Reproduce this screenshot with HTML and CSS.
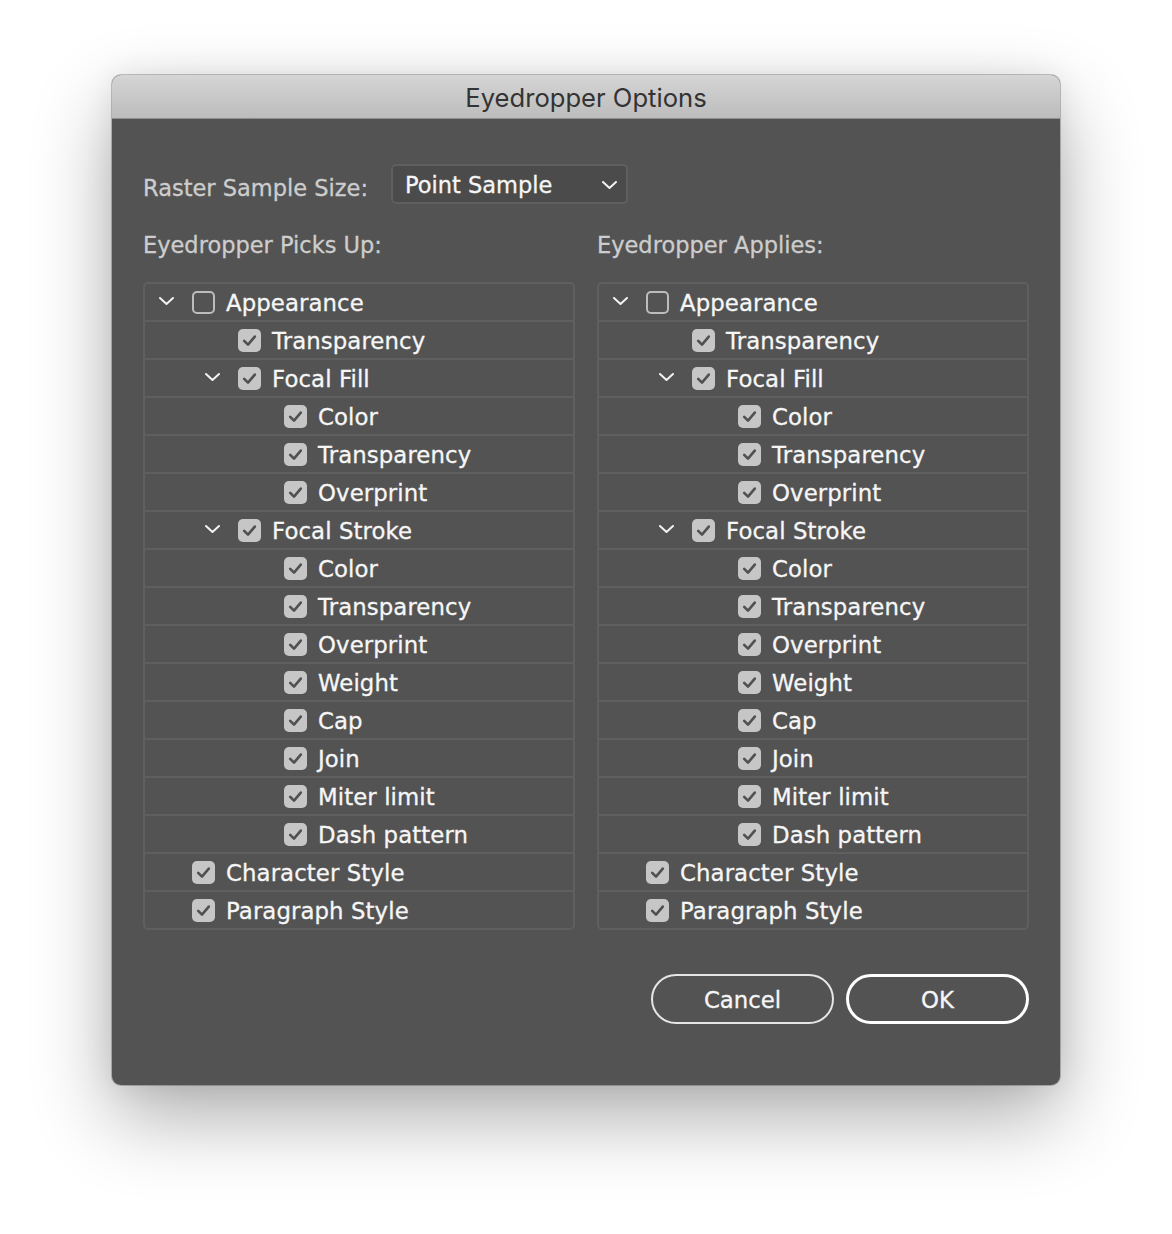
FILE: index.html
```html
<!DOCTYPE html>
<html>
<head>
<meta charset="utf-8">
<title>Eyedropper Options</title>
<link rel="stylesheet" href="styles.css">
</head>
<body>
<svg class="defs" width="0" height="0" aria-hidden="true">
  <symbol id="chev" viewBox="0 0 15 8"><path d="M1 1 L7.5 7 L14 1" fill="none" stroke="currentColor" stroke-width="2" stroke-linecap="round" stroke-linejoin="round"/></symbol>
  <symbol id="tick" viewBox="0 0 23 23"><path d="M6.2 11.8 L10 15.6 L16.8 7.6" fill="none" stroke="currentColor" stroke-width="2.6" stroke-linecap="round" stroke-linejoin="round"/></symbol>
</svg>
<div class="stage">
  <div class="window">
    <div class="titlebar">Eyedropper Options</div>
    <div class="content">
      <div class="raster">
        <span class="label">Raster Sample Size:</span>
        <div class="select"><span>Point Sample</span><svg class="select-chev"><use href="#chev"/></svg></div>
      </div>
      <div class="columns">
        <section>
          <div class="heading">Eyedropper Picks Up:</div>
          <div class="tree">
            <div class="row l0"><span class="twisty"><svg><use href="#chev"/></svg></span><span class="cb off"></span><span class="text">Appearance</span></div>
            <div class="row l1"><span class="twisty"></span><span class="cb"><svg><use href="#tick"/></svg></span><span class="text">Transparency</span></div>
            <div class="row l1"><span class="twisty"><svg><use href="#chev"/></svg></span><span class="cb"><svg><use href="#tick"/></svg></span><span class="text">Focal Fill</span></div>
            <div class="row l2"><span class="twisty"></span><span class="cb"><svg><use href="#tick"/></svg></span><span class="text">Color</span></div>
            <div class="row l2"><span class="twisty"></span><span class="cb"><svg><use href="#tick"/></svg></span><span class="text">Transparency</span></div>
            <div class="row l2"><span class="twisty"></span><span class="cb"><svg><use href="#tick"/></svg></span><span class="text">Overprint</span></div>
            <div class="row l1"><span class="twisty"><svg><use href="#chev"/></svg></span><span class="cb"><svg><use href="#tick"/></svg></span><span class="text">Focal Stroke</span></div>
            <div class="row l2"><span class="twisty"></span><span class="cb"><svg><use href="#tick"/></svg></span><span class="text">Color</span></div>
            <div class="row l2"><span class="twisty"></span><span class="cb"><svg><use href="#tick"/></svg></span><span class="text">Transparency</span></div>
            <div class="row l2"><span class="twisty"></span><span class="cb"><svg><use href="#tick"/></svg></span><span class="text">Overprint</span></div>
            <div class="row l2"><span class="twisty"></span><span class="cb"><svg><use href="#tick"/></svg></span><span class="text">Weight</span></div>
            <div class="row l2"><span class="twisty"></span><span class="cb"><svg><use href="#tick"/></svg></span><span class="text">Cap</span></div>
            <div class="row l2"><span class="twisty"></span><span class="cb"><svg><use href="#tick"/></svg></span><span class="text">Join</span></div>
            <div class="row l2"><span class="twisty"></span><span class="cb"><svg><use href="#tick"/></svg></span><span class="text">Miter limit</span></div>
            <div class="row l2"><span class="twisty"></span><span class="cb"><svg><use href="#tick"/></svg></span><span class="text">Dash pattern</span></div>
            <div class="row l0"><span class="twisty"></span><span class="cb"><svg><use href="#tick"/></svg></span><span class="text">Character Style</span></div>
            <div class="row l0"><span class="twisty"></span><span class="cb"><svg><use href="#tick"/></svg></span><span class="text">Paragraph Style</span></div>
          </div>
        </section>
        <section>
          <div class="heading">Eyedropper Applies:</div>
          <div class="tree">
            <div class="row l0"><span class="twisty"><svg><use href="#chev"/></svg></span><span class="cb off"></span><span class="text">Appearance</span></div>
            <div class="row l1"><span class="twisty"></span><span class="cb"><svg><use href="#tick"/></svg></span><span class="text">Transparency</span></div>
            <div class="row l1"><span class="twisty"><svg><use href="#chev"/></svg></span><span class="cb"><svg><use href="#tick"/></svg></span><span class="text">Focal Fill</span></div>
            <div class="row l2"><span class="twisty"></span><span class="cb"><svg><use href="#tick"/></svg></span><span class="text">Color</span></div>
            <div class="row l2"><span class="twisty"></span><span class="cb"><svg><use href="#tick"/></svg></span><span class="text">Transparency</span></div>
            <div class="row l2"><span class="twisty"></span><span class="cb"><svg><use href="#tick"/></svg></span><span class="text">Overprint</span></div>
            <div class="row l1"><span class="twisty"><svg><use href="#chev"/></svg></span><span class="cb"><svg><use href="#tick"/></svg></span><span class="text">Focal Stroke</span></div>
            <div class="row l2"><span class="twisty"></span><span class="cb"><svg><use href="#tick"/></svg></span><span class="text">Color</span></div>
            <div class="row l2"><span class="twisty"></span><span class="cb"><svg><use href="#tick"/></svg></span><span class="text">Transparency</span></div>
            <div class="row l2"><span class="twisty"></span><span class="cb"><svg><use href="#tick"/></svg></span><span class="text">Overprint</span></div>
            <div class="row l2"><span class="twisty"></span><span class="cb"><svg><use href="#tick"/></svg></span><span class="text">Weight</span></div>
            <div class="row l2"><span class="twisty"></span><span class="cb"><svg><use href="#tick"/></svg></span><span class="text">Cap</span></div>
            <div class="row l2"><span class="twisty"></span><span class="cb"><svg><use href="#tick"/></svg></span><span class="text">Join</span></div>
            <div class="row l2"><span class="twisty"></span><span class="cb"><svg><use href="#tick"/></svg></span><span class="text">Miter limit</span></div>
            <div class="row l2"><span class="twisty"></span><span class="cb"><svg><use href="#tick"/></svg></span><span class="text">Dash pattern</span></div>
            <div class="row l0"><span class="twisty"></span><span class="cb"><svg><use href="#tick"/></svg></span><span class="text">Character Style</span></div>
            <div class="row l0"><span class="twisty"></span><span class="cb"><svg><use href="#tick"/></svg></span><span class="text">Paragraph Style</span></div>
          </div>
        </section>
      </div>
      <div class="buttons">
        <button class="btn">Cancel</button>
        <button class="btn primary">OK</button>
      </div>
    </div>
  </div>
</div>
</body>
</html>
```

FILE: styles.css
```css
html, body {
  margin: 0;
  background: #ffffff;
  font-family: "DejaVu Sans", sans-serif;
}

.defs {
  position: absolute;
  width: 0;
  height: 0;
  overflow: hidden;
}

.stage {
  height: 1234px;
  box-sizing: border-box;
  padding: 75px 0 0 112px;
  background: #ffffff;
}

.window {
  width: 948px;
  height: 1010px;
  border-radius: 9px;
  background: #535353;
  overflow: hidden;
  box-shadow: 0 0 0 1px rgba(0, 0, 0, 0.22), 0 32px 80px rgba(0, 0, 0, 0.32), 0 0 30px rgba(0, 0, 0, 0.08);
}

.titlebar {
  height: 44px;
  background: linear-gradient(#d5d5d5, #bcbcbc);
  border-bottom: 1px solid #8e8e8e;
  display: flex;
  align-items: center;
  justify-content: center;
  font-family: Inter, "Liberation Sans", sans-serif;
  font-size: 25.6px;
  color: #333333;
  padding-top: 2px;
  box-sizing: border-box;
}

.content {
  padding: 45px 31px 0;
}

.raster {
  display: flex;
  align-items: center;
  gap: 23px;
  height: 40px;
}

.label {
  color: #cdcdcd;
  font-size: 22.5px;
  padding-top: 7px;
  -webkit-text-stroke: 0.3px currentColor;
}

.select {
  width: 237px;
  height: 40px;
  box-sizing: border-box;
  border: 2px solid #5f5f5f;
  border-radius: 5px;
  background: #4b4b4b;
  display: flex;
  align-items: center;
  justify-content: space-between;
  padding: 1px 9px 0 12px;
  color: #f6f6f6;
  font-size: 22.5px;
  -webkit-text-stroke: 0.3px currentColor;
}

.select-chev {
  width: 15px;
  height: 8px;
  color: #f2f2f2;
}

.columns {
  display: grid;
  grid-template-columns: 432px 432px;
  column-gap: 22px;
  margin-top: 27px;
}

.heading {
  line-height: 28px;
  font-size: 22.5px;
  color: #cdcdcd;
  margin-bottom: 23px;
  -webkit-text-stroke: 0.3px currentColor;
}

.tree {
  border: 2px solid #5f5f5f;
  border-radius: 5px;
}

.row {
  height: 36px;
  display: flex;
  align-items: center;
}

.row + .row {
  border-top: 2px solid #5f5f5f;
}

.l1 { padding-left: 46px; }
.l2 { padding-left: 92px; }

.twisty {
  width: 43px;
  flex: none;
  display: flex;
  justify-content: center;
  align-items: center;
  color: #f2f2f2;
}

.twisty svg {
  width: 15px;
  height: 8px;
  margin-top: -2px;
}

.cb {
  width: 23px;
  height: 23px;
  flex: none;
  margin-left: 4px;
  border-radius: 5px;
  background: #c6c6c6;
  color: #505050;
  box-sizing: border-box;
}

.cb svg {
  width: 23px;
  height: 23px;
  display: block;
}

.cb.off {
  background: transparent;
  border: 2px solid #bcbcbc;
}

.text {
  margin-left: 11px;
  padding-top: 2px;
  font-size: 22.8px;
  letter-spacing: 0.1px;
  color: #f6f6f6;
  white-space: nowrap;
  -webkit-text-stroke: 0.3px currentColor;
}

.buttons {
  display: flex;
  justify-content: flex-end;
  gap: 12px;
  margin-top: 44px;
}

.btn {
  width: 183px;
  height: 50px;
  box-sizing: border-box;
  border-radius: 25px;
  border: 2px solid #e6e6e6;
  background: transparent;
  color: #f6f6f6;
  font-family: "DejaVu Sans", sans-serif;
  font-size: 22.8px;
  -webkit-text-stroke: 0.3px currentColor;
  padding: 2px 0 0;
}

.btn.primary {
  border: 3px solid #ffffff;
}
```
